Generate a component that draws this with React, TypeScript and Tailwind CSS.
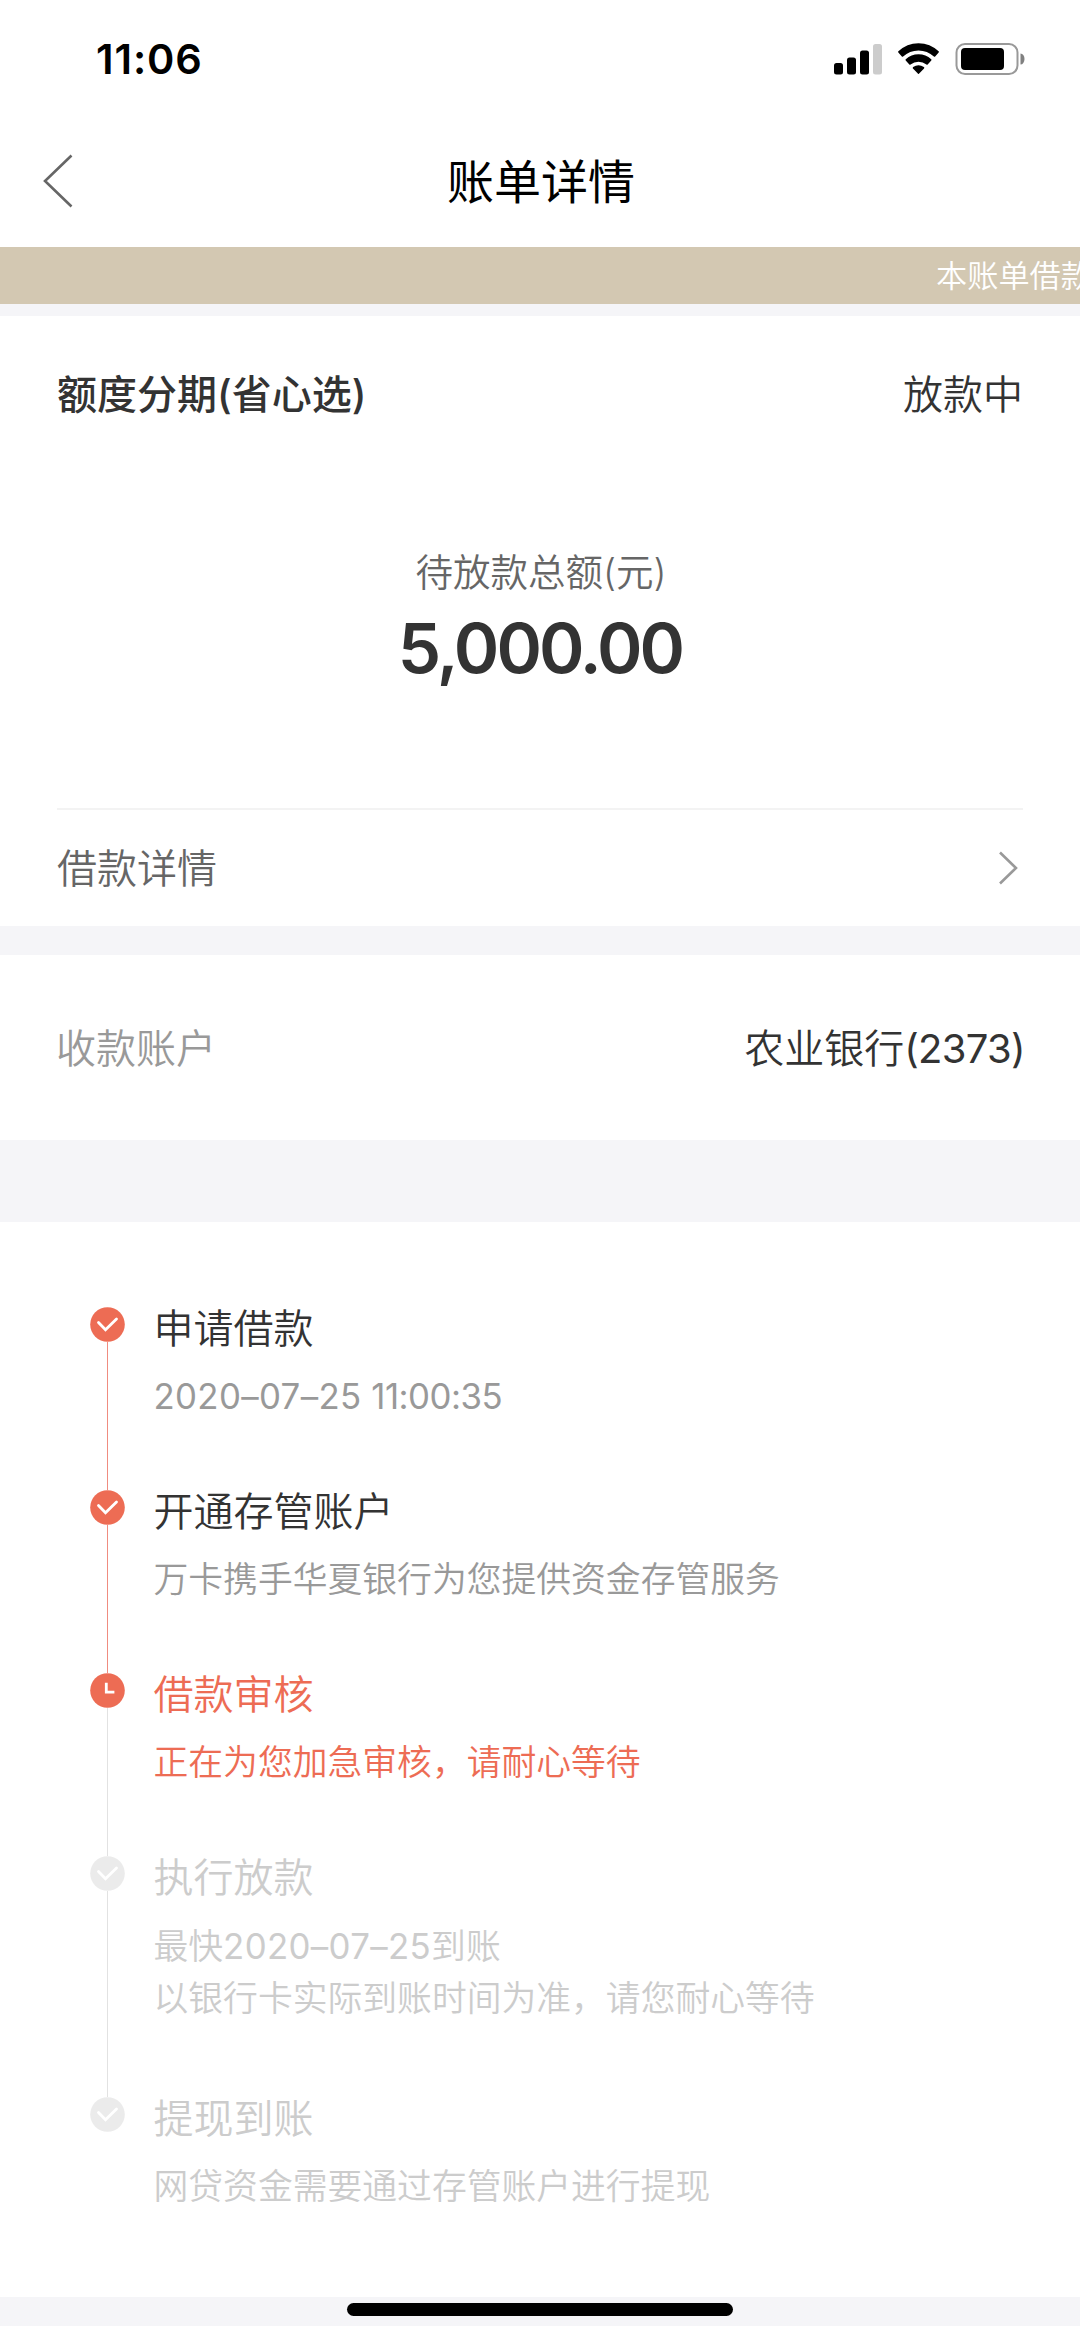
import React from 'react';
import clsx from 'clsx';

type StepState = 'done' | 'current' | 'pending';

interface Step {
  title: string;
  lines: string[];
  state: StepState;
}

const steps: Step[] = [
  { title: '申请借款', lines: ['2020–07–25 11:00:35'], state: 'done' },
  { title: '开通存管账户', lines: ['万卡携手华夏银行为您提供资金存管服务'], state: 'done' },
  { title: '借款审核', lines: ['正在为您加急审核，请耐心等待'], state: 'current' },
  {
    title: '执行放款',
    lines: ['最快2020–07–25到账', '以银行卡实际到账时间为准，请您耐心等待'],
    state: 'pending',
  },
  { title: '提现到账', lines: ['网贷资金需要通过存管账户进行提现'], state: 'pending' },
];

const StatusBar = () => (
  <div className="flex h-[118px] items-center justify-between pl-[96px] pr-[55px] text-black">
    <span className="pt-0.5 text-[41.5px] font-semibold leading-none tracking-[0.9px]">11:06</span>
    <svg width="191" height="32" viewBox="0 0 191 32">
      {/* Signal */}
      <rect x="0" y="20" width="9" height="11.5" rx="2.5" />
      <rect x="13" y="14.5" width="9" height="17" rx="2.5" />
      <rect x="26" y="7.5" width="9" height="24" rx="2.5" />
      <rect x="39" y="1" width="9" height="30.5" rx="2.5" fill="#cccccc" />
      {/* Wifi */}
      <path d="M65 9 A28 28 0 0 1 104 9 L100.5 12.8 A23.5 23.5 0 0 0 68.5 12.8 Z" stroke="black" strokeWidth="1.8" strokeLinejoin="round" />
      <path d="M72.4 16.8 A17.8 17.8 0 0 1 96.6 16.8 L93 20.8 A13.8 13.8 0 0 0 76 20.8 Z" stroke="black" strokeWidth="1.8" strokeLinejoin="round" />
      <path d="M79.6 24.8 A8.5 8.5 0 0 1 89.4 24.8 L84.5 30 Z" stroke="black" strokeWidth="1.8" strokeLinejoin="round" />
      {/* Battery */}
      <rect x="122.5" y="1" width="61" height="30" rx="8.5" fill="none" stroke="#999999" strokeWidth="2" />
      <rect x="127" y="5" width="43" height="22" rx="4" />
      <path d="M186.5 10.5 a4 5.5 0 0 1 0 11 Z" fill="#808080" />
    </svg>
  </div>
);

const NavBar = () => (
  <header className="grid h-[129px] grid-cols-3 items-center pb-1 text-black">
    <svg width="34" height="56" viewBox="0 0 34 56" fill="none" className="ml-[41px]">
      <path d="M30.5 2.5 L4 28 L30.5 53.5" stroke="#666666" strokeWidth="2.6" />
    </svg>
    <h1 className="pl-0.5 pt-px text-center text-[47px] leading-none">账单详情</h1>
  </header>
);

const StepIcon = ({ state }: { state: StepState }) => (
  <svg width="35" height="35" viewBox="0 0 35 35" fill="none" className="shrink-0">
    <circle cx="17.5" cy="17.5" r="17.3" fill={state === 'pending' ? '#ebebeb' : '#ed6c54'} />
    {state === 'current' ? (
      <path d="M16.3 9.8 V19.2 H24.4" stroke="white" strokeWidth="2.8" />
    ) : (
      <path d="M8.5 15.5 L15.5 22.8 L26.5 12" stroke="white" strokeWidth="2.8" strokeLinecap="round" />
    )}
  </svg>
);

// Dates and times are a touch heavier than the Chinese text around them
const StepLine = ({ text }: { text: string }) => (
  <p className="whitespace-nowrap">
    {text.split(/(\d{4}–\d{2}–\d{2}|\d{2}:\d{2}:\d{2})/).map((part, i) => {
      if (i % 2 === 0) return part;
      return (
        <span key={i} className={clsx('font-normal', part.includes(':') ? 'tracking-[-0.5px]' : 'tracking-[0.35px]')}>
          {part}
        </span>
      );
    })}
  </p>
);

const TimelineItem = ({ step, isLast }: { step: Step; isLast: boolean }) => {
  const { title, lines, state } = step;

  return (
    <li className="flex">
      <div className="flex w-[35px] flex-col items-center">
        <StepIcon state={state} />
        {!isLast && (
          <div className={clsx('w-px flex-1', state === 'done' ? 'bg-[#f08c80]' : 'bg-[#e2e2e2]')} />
        )}
      </div>
      <div
        className={clsx(
          'ml-[29px] font-[350]',
          !isLast && (lines.length > 1 ? 'pb-[72px]' : 'pb-[67.3px]'),
          state === 'current' && 'text-[#ed6c54]',
          state === 'pending' && 'text-[#cccccc]'
        )}
      >
        <h3 className="text-[40px] font-[350] leading-[43px]">{title}</h3>
        <div className={clsx('mt-[20.3px] text-[34.8px] leading-[52.5px]', state === 'done' && 'text-[#999999]')}>
          {lines.map((line) => (
            <StepLine key={line} text={line} />
          ))}
        </div>
      </div>
    </li>
  );
};

export default function App() {
  return (
    <div className="flex h-[2337px] w-[1080px] flex-col overflow-hidden bg-white font-['Inter','Noto_Sans_CJK_SC',sans-serif] text-[40px] text-[#333333]">
      <StatusBar />
      <NavBar />

      {/* Scrolling notice */}
      <div className="flex h-[57px] items-center overflow-hidden bg-[#d3c8b2] pl-[936px] pt-0.5 text-[31.2px] leading-none text-white">
        <span className="whitespace-nowrap font-[350]">本账单借款</span>
      </div>
      <div className="h-3 bg-[#f5f5f8]" />

      {/* Bill summary */}
      <section className="px-[57px]">
        <div className="flex h-[156px] items-center justify-between leading-none">
          <h2 className="pt-px font-medium">额度分期(省心选)</h2>
          <span className="pt-px font-[350]">放款中</span>
        </div>
        <div className="flex h-[336px] flex-col items-center pt-[76px]">
          <p className="pl-0.5 text-[37.5px] font-[350] leading-[50px] text-[#666666]">待放款总额(元)</p>
          <p className="mt-[14px] text-[69px] font-semibold leading-[72px] tracking-[-2.9px]">5,000.00</p>
        </div>
        <div className="flex h-[118px] items-center justify-between border-t-2 border-[#f3f3f3] leading-none text-[#666666]">
          <span className="pt-0.5 font-[350]">借款详情</span>
          <svg width="22" height="36" viewBox="0 0 22 36" fill="none" className="mr-[3px]">
            <path d="M2 2.5 L18 18 L2 33.5" stroke="#999999" strokeWidth="2.6" />
          </svg>
        </div>
      </section>
      <div className="h-[29px] bg-[#f5f5f8]" />

      {/* Receiving account */}
      <section className="flex h-[185px] items-center justify-between pl-[56px] pr-[55px] pt-0.5 font-[350] leading-none">
        <span className="text-[#999999]">收款账户</span>
        <span>农业银行<span className="font-normal tracking-[-0.7px]">(2373)</span></span>
      </section>
      <div className="h-[82px] bg-[#f5f5f8]" />

      {/* Progress */}
      <ol className="h-[1075px] pl-[89.5px] pt-[85px]">
        {steps.map((step, i) => (
          <TimelineItem key={step.title} step={step} isLast={i === steps.length - 1} />
        ))}
      </ol>

      {/* Home indicator */}
      <div className="flex h-[29px] justify-center bg-[#f5f5f8] pt-[6px]">
        <div className="h-[13px] w-[386px] rounded-full bg-black" />
      </div>
    </div>
  );
}
